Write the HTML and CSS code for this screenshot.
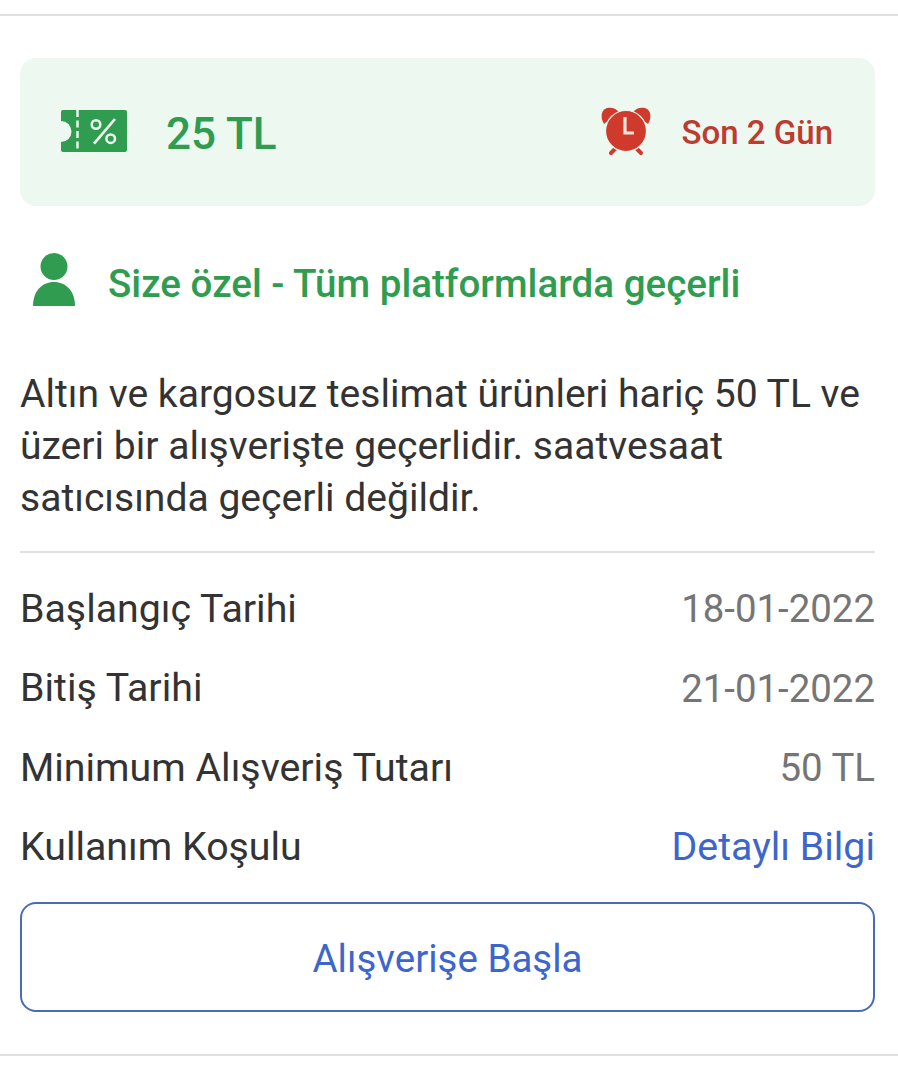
FILE: index.html
```html
<!DOCTYPE html>
<html>
<head>
	<meta charset="utf-8">
	<meta name="viewport" content="width=device-width, initial-scale=1">
	<title>Kupon</title>
	<link rel="stylesheet" href="styles.css">
</head>
<body>

<div class="coupon">
	<div class="banner">
		<div class="amount">
			<svg class="ticket-icon" viewBox="0 0 66 42" width="66" height="42">
				<path fill="#2f9c50" d="M2 0H64a2 2 0 0 1 2 2V40a2 2 0 0 1-2 2H2a2 2 0 0 1-2-2V32a10.500 10.500 0 0 0 0-21V2a2 2 0 0 1 2-2z"/>
				<path stroke="#edf8f1" stroke-width="2.500" stroke-dasharray="7 3.500" d="M16.500 0V42" fill="none"/>
				<circle cx="35" cy="14.500" r="4.300" fill="none" stroke="#edf8f1" stroke-width="2.500"/>
				<circle cx="49.700" cy="28.700" r="4.300" fill="none" stroke="#edf8f1" stroke-width="2.500"/>
				<path d="M54 9L33 33.700" stroke="#edf8f1" stroke-width="2.700" fill="none"/>
			</svg>
			<span class="amount-text">25 TL</span>
		</div>
		<div class="deadline">
			<svg class="alarm-icon" viewBox="0 0 50 50" width="50" height="50">
				<path fill="#cf3a2c" d="M3 17C-1 10 0 3 6 1 10 0 15 1 18 5z"/>
				<path fill="#cf3a2c" d="M47 17C51 10 50 3 44 1 40 0 35 1 32 5z"/>
				<path d="M15 41l-5 5M35 41l5 5" stroke="#cf3a2c" stroke-width="4" stroke-linecap="round" fill="none"/>
				<circle cx="25" cy="24" r="20.500" fill="#cf3a2c" stroke="#edf8f1" stroke-width="1.200"/>
				<path d="M24 10V26H33" stroke="#f6e3dc" stroke-width="3.200" fill="none"/>
			</svg>
			<span class="deadline-text">Son 2 Gün</span>
		</div>
	</div>

	<div class="scope">
		<svg class="person-icon" viewBox="0 0 42 53" width="42" height="53">
			<circle cx="21" cy="13.500" r="13.500" fill="#2f9c50"/>
			<path fill="#2f9c50" d="M0 53C0 38 9 29 21 29s21 9 21 24z"/>
		</svg>
		<span class="scope-text">Size özel - Tüm platformlarda geçerli</span>
	</div>

	<p class="desc">Altın ve kargosuz teslimat ürünleri hariç 50 TL ve üzeri bir alışverişte geçerlidir. saatvesaat satıcısında geçerli değildir.</p>

	<div class="details">
		<div class="row">
			<span>Başlangıç Tarihi</span>
			<span class="val">18-01-2022</span>
		</div>
		<div class="row">
			<span>Bitiş Tarihi</span>
			<span class="val">21-01-2022</span>
		</div>
		<div class="row">
			<span>Minimum Alışveriş Tutarı</span>
			<span class="val">50 TL</span>
		</div>
		<div class="row">
			<span>Kullanım Koşulu</span>
			<a class="link" href="#">Detaylı Bilgi</a>
		</div>
	</div>

	<button class="shop-btn">Alışverişe Başla</button>
</div>

</body>
</html>
```

FILE: styles.css
```css
* {
	box-sizing: border-box;
	margin: 0;
	padding: 0;
	font-family: Roboto, sans-serif;
}
body {
	background-color: #fff;
	padding-top: 14px;
	color: #333;
}
.coupon {
	border-top: 2px solid #e0e0e0;
	border-bottom: 2px solid #e0e0e0;
	padding: 42px 23px 43px 20px;
	height: 1042px;
}
.banner {
	display: flex;
	justify-content: space-between;
	align-items: center;
	height: 148px;
	padding: 0 42px 0 41px;
	background-color: #edf8f1;
	border-radius: 16px;
}
.amount,
.deadline {
	display: flex;
	align-items: center;
}
.ticket-icon {
	margin-right: 39px;
	margin-top: -2px;
}
.amount-text {
	font-size: 44px;
	font-weight: 500;
	color: #2f9c50;
	padding-top: 4px;
}
.alarm-icon {
	margin-right: 31px;
}
.deadline-text {
	font-size: 33px;
	font-weight: 500;
	color: #bd3b30;
}
.scope {
	display: flex;
	align-items: center;
	margin-top: 46px;
	padding-left: 13px;
	height: 54px;
	font-size: 38.600px;
	font-weight: 500;
	color: #2f9c50;
}
.person-icon {
	margin-right: 33px;
}
.scope-text {
	padding-top: 8px;
}
.desc {
	margin-top: 62px;
	font-size: 39.100px;
	line-height: 52px;
	padding-bottom: 27px;
	border-bottom: 2px solid #e0e0e0;
}
.details {
	padding-top: 16px;
}
.row {
	display: flex;
	justify-content: space-between;
	align-items: center;
	height: 79.500px;
	font-size: 39.300px;
}
.val {
	font-size: 38.400px;
	color: #757575;
}
.link {
	color: #3d66cc;
	text-decoration: none;
}
.shop-btn {
	display: block;
	width: 100%;
	height: 110px;
	margin-top: 15px;
	padding-top: 2px;
	background: #fff;
	border: 2px solid #4a6cb8;
	border-radius: 16px;
	font-size: 38.500px;
	color: #3d66cc;
}
```
